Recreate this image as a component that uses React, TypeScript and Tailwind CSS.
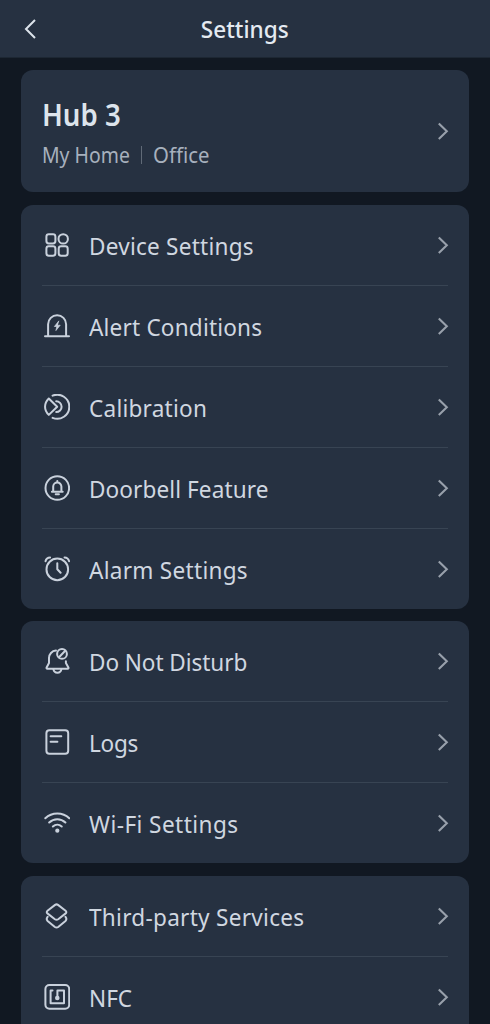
import type { ReactNode } from "react";

const DeviceIcon = () => (
  <>
    <rect x="2.4" y="2.3" width="9" height="9.2" rx="2.4" />
    <circle cx="19.2" cy="6.9" r="4.7" />
    <rect x="2.4" y="14.3" width="9" height="9.4" rx="2.4" />
    <rect x="14.7" y="14.3" width="9" height="9.4" rx="2.4" />
  </>
);

const AlertIcon = () => (
  <>
    <path d="M1 23.3H25M4.1 23V11.2a9 9 0 0 1 18 0V23" />
    <path d="M14.6 8.2l-4.2 5.3h2.4l-.9 4.1 4.3-5.4h-2.5z" fill="currentColor" strokeWidth=".7" />
  </>
);

const CalibrationIcon = () => (
  <>
    <path d="M8.6 1.7A12 12 0 1 1 8.6 23.8" />
    <path d="M4.8 4.5L13.2 12.7 4.8 20.9C-.2 15.9-.2 9.5 4.8 4.5z" />
    <path d="M12.2 7.3a5.4 5.4 0 1 1 0 10.8" />
  </>
);

const DoorbellIcon = () => (
  <>
    <circle cx="13.3" cy="13" r="11.8" />
    <path d="M7.9 16.8H18.7M9.2 16.6V11.6a4.1 4.1 0 0 1 8.2 0V16.6M13.3 6v1.5M11.7 19.2h3.2" />
  </>
);

const AlarmIcon = () => (
  <>
    <circle cx="13.3" cy="13.4" r="10.8" />
    <path d="M13.3 7.3V13.3L16.6 16.8M1.5 5.2C2 3.2 3.6 1.6 6.1 1.5M20.5 1.5C23 1.6 24.6 3.2 25.1 5.2" />
  </>
);

const DisturbIcon = () => (
  <>
    <path d="M12 2.6C7.9 2.9 5 6.2 5 10V15L2.6 19.4C2.3 20.1 2.6 20.7 3.3 20.7H23.7C24.4 20.7 24.8 20.1 24.4 19.4L21.9 15V13.2" />
    <path d="M9.4 21.2C9.8 23.6 11.3 24.8 13.4 24.8S17 23.6 17.4 21.2" />
    <circle cx="18" cy="5.9" r="4.9" />
    <path d="M15 9.2L21.2 2.7" />
  </>
);

const LogsIcon = () => (
  <>
    <rect x="2.4" y="1.2" width="21.8" height="23.6" rx="3" />
    <path d="M6.6 7.3H17.3M6.6 12.8H13.4" />
  </>
);

const WifiIcon = () => (
  <>
    <path d="M1.3 8.2C8 1.8 18.6 1.8 25.3 8.2M5.2 12.5C9.8 8 16.8 8 21.4 12.5M8.9 16.5C11.5 14.1 15.1 14.1 17.7 16.5" />
    <circle cx="13.3" cy="20.7" r="2.1" fill="currentColor" stroke="none" />
  </>
);

const ServicesIcon = () => (
  <>
    <path d="M11.1 1.9L3.5 7.8C2.6 8.5 2.5 9.6 3.4 10.4L10.9 16.2C12 17 13.1 17 14.2 16.2L21.7 10.4C22.6 9.6 22.5 8.5 21.6 7.8L14 1.9C13 1.2 12.1 1.2 11.1 1.9z" />
    <path d="M3.6 13.9C2.5 15.4 2.4 16.8 3.6 17.9L10.9 24C12 24.8 13.1 24.8 14.2 24L21.5 17.9C22.7 16.8 22.6 15.4 21.5 13.9" />
  </>
);

const NfcIcon = () => (
  <>
    <rect x="1.4" y="1" width="23.8" height="23.8" rx="4" />
    <path d="M8.5 6.5H6.6V19.3H20V6.5H13.4V13.4" />
    <circle cx="13.3" cy="14" r="2.3" fill="currentColor" stroke="none" />
  </>
);

const groups: { label: string; icon: ReactNode; tracking: string }[][] = [
  [
    { label: "Device Settings", icon: <DeviceIcon />, tracking: "tracking-[.25px]" },
    { label: "Alert Conditions", icon: <AlertIcon />, tracking: "tracking-[.2px]" },
    { label: "Calibration", icon: <CalibrationIcon />, tracking: "tracking-[.25px]" },
    { label: "Doorbell Feature", icon: <DoorbellIcon />, tracking: "tracking-[.1px]" },
    { label: "Alarm Settings", icon: <AlarmIcon />, tracking: "tracking-[.3px]" },
  ],
  [
    { label: "Do Not Disturb", icon: <DisturbIcon />, tracking: "tracking-[-.07px]" },
    { label: "Logs", icon: <LogsIcon />, tracking: "tracking-[-.3px]" },
    { label: "Wi-Fi Settings", icon: <WifiIcon />, tracking: "tracking-[.47px]" },
  ],
  [
    { label: "Third-party Services", icon: <ServicesIcon />, tracking: "tracking-[.3px]" },
    { label: "NFC", icon: <NfcIcon />, tracking: "tracking-normal" },
  ],
];

const Chevron = () => (
  <svg
    className="-mr-px h-[18px] w-3 shrink-0 text-[#98a0ab]"
    viewBox="0 0 12 18"
    fill="none"
    stroke="currentColor"
    strokeWidth="2.1"
  >
    <path d="M1.8 1.4L9.8 9.2l-8 7.8" />
  </svg>
);

const Row = ({ label, icon, tracking }: { label: string; icon: ReactNode; tracking: string }) => (
  <div className="flex h-[81px] items-center border-b border-[#384453] pl-[2px] last:h-[80px] last:border-b-0">
    <svg
      className="size-[26px] shrink-0 text-[#c9d1dc]"
      viewBox="0 0 26 26"
      fill="none"
      stroke="currentColor"
      strokeWidth="2"
      strokeLinecap="round"
      strokeLinejoin="round"
    >
      {icon}
    </svg>
    <span
      className={`ml-[18.6px] origin-left scale-x-[.94] pt-[2px] text-[24px] leading-8 whitespace-nowrap ${tracking}`}
    >
      {label}
    </span>
    <div className="ml-auto">
      <Chevron />
    </div>
  </div>
);

const App = () => {
  return (
    <div className="h-screen overflow-hidden bg-[#111822] font-['Noto_Sans','Open_Sans',sans-serif] text-[#d0d7e0]">
      <header className="grid h-[58px] grid-cols-[1fr_auto_1fr] items-center border-b border-[#1d2733] bg-[#263141] px-6">
        <svg
          className="h-5 w-3 text-[#dce3eb]"
          viewBox="0 0 12 20"
          fill="none"
          stroke="currentColor"
          strokeWidth="2"
        >
          <path d="M11 1L2 10l9 9" />
        </svg>
        <h1 className="scale-x-[.96] pt-px text-[23.5px] leading-8 font-medium text-[#e4eaf1]">
          Settings
        </h1>
      </header>

      <main className="flex flex-col gap-[13px] px-[21px] pt-3">
        <section className="flex h-[122px] shrink-0 items-center rounded-xl bg-[#263141] px-[21px]">
          <div className="pt-2">
            <h2 className="origin-left scale-x-[.92] text-[30px] leading-10 font-semibold text-[#dde4ec]">
              Hub 3
            </h2>
            <div className="flex items-center gap-[11px] text-[21px] leading-10 text-[#a7b0bd]">
              <span className="w-[88px] origin-left scale-x-[.925] whitespace-nowrap">My Home</span>
              <span className="h-[18px] w-px bg-[#606a77]" />
              <span className="origin-left scale-x-[.97]">Office</span>
            </div>
          </div>
          <div className="ml-auto">
            <Chevron />
          </div>
        </section>

        {groups.map((rows, i) => (
          <section key={i} className="-mb-px shrink-0 rounded-xl bg-[#263141] px-[21px] last:mt-px">
            {rows.map((row) => (
              <Row key={row.label} {...row} />
            ))}
          </section>
        ))}
      </main>
    </div>
  );
};

export default App;
